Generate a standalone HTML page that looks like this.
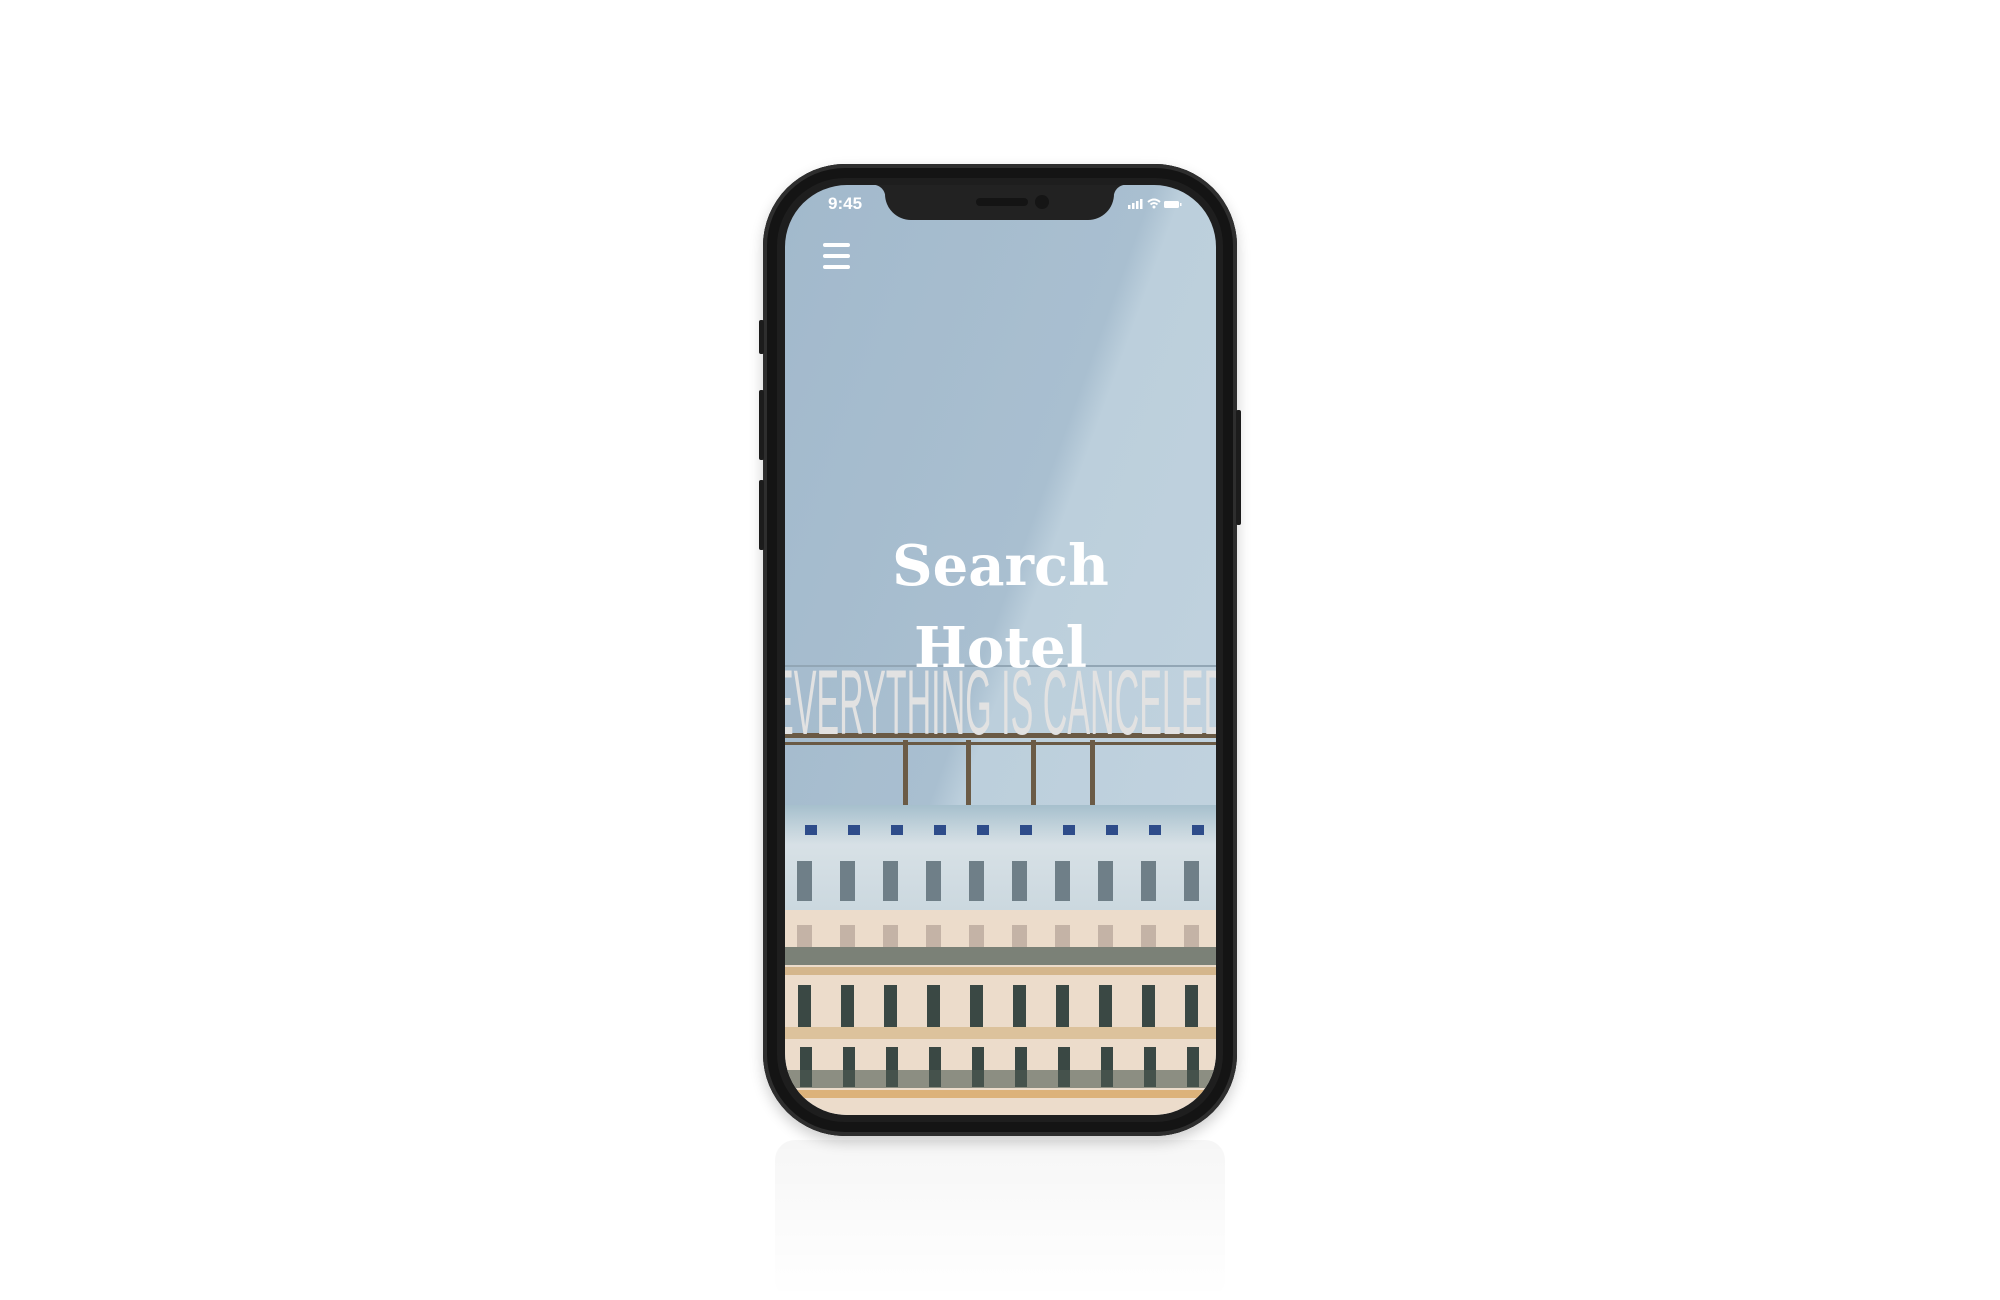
<!DOCTYPE html>
<html><head><style>
html,body{margin:0;padding:0;width:2000px;height:1300px;background:#fff;overflow:hidden}
.refl{position:absolute;left:775px;top:1140px;width:450px;height:160px;background:linear-gradient(rgba(0,0,0,0.035),rgba(0,0,0,0));border-radius:20px}
.phone{position:absolute;left:763px;top:164px;width:474px;height:972px;border-radius:82px;background:#1e1e1e;box-shadow:inset 0 0 0 4px #2e2e2e,inset 0 0 0 14px #141414,0 6px 14px rgba(0,0,0,0.2)}
.btn{position:absolute;background:#1c1c1c;border-radius:2px}
.screen{position:absolute;left:785px;top:185px;width:431px;height:930px;border-radius:62px;overflow:hidden;background:linear-gradient(110deg,#a2b9cc 0%,#a9bfd0 48%,#bccfdc 52%,#c2d3df 100%)}
.notch{position:absolute;left:100px;top:0;width:229px;height:35px;background:#222;border-radius:0 0 26px 26px}
.notch:before{content:"";position:absolute;left:-12px;top:0;width:12px;height:12px;background:radial-gradient(circle at 0 100%,transparent 12px,#222 12.5px)}
.notch:after{content:"";position:absolute;right:-12px;top:0;width:12px;height:12px;background:radial-gradient(circle at 100% 100%,transparent 12px,#222 12.5px)}
.spk{position:absolute;left:91px;top:13px;width:52px;height:8px;border-radius:4px;background:#141414}
.cam{position:absolute;left:150px;top:10px;width:14px;height:14px;border-radius:50%;background:#151515}
.time{position:absolute;left:43px;top:9px;color:#fff;font:bold 17px "Liberation Sans",sans-serif}
.ham{position:absolute;left:38px;top:58px;width:27px}
.ham div{height:4px;background:#fff;border-radius:2px;margin-bottom:7px}
.title{position:absolute;left:0;width:431px;top:340px;text-align:center;color:#fff;font:bold 56px/82px "DejaVu Serif","Liberation Serif",serif;z-index:3}
.sign{position:absolute;left:-14px;top:468px;white-space:nowrap;color:#e2e2e2;font:92px "Liberation Sans",sans-serif;transform:scaleX(0.37);transform-origin:0 0;line-height:100px;z-index:2}
.bar{position:absolute;left:0;width:431px;background:#6a5a45}
.post{position:absolute;width:5px;top:555px;height:65px;background:#6b5b46}
.roof{position:absolute;left:0;top:620px;width:431px;height:105px;background:linear-gradient(#dfe6ea,#cbd8df)}
.facade{position:absolute;left:0;top:725px;width:431px;height:210px;background:#ecdccb}
.row{position:absolute;left:0;width:431px}
</style></head><body>
<div class="refl"></div>
<div class="phone"></div>
<div class="btn" style="left:759px;top:320px;width:5px;height:34px"></div>
<div class="btn" style="left:759px;top:390px;width:5px;height:70px"></div>
<div class="btn" style="left:759px;top:480px;width:5px;height:70px"></div>
<div class="btn" style="left:1236px;top:410px;width:5px;height:115px"></div>
<div class="screen">
 <div class="notch"><div class="spk"></div><div class="cam"></div></div>
 <div class="time">9:45</div>
 <svg style="position:absolute;left:341px;top:12px" width="70" height="14" viewBox="0 0 70 14">
  <rect x="2" y="8" width="2.5" height="4" fill="#fff"/><rect x="6" y="6" width="2.5" height="6" fill="#fff"/><rect x="10" y="4" width="2.5" height="8" fill="#fff"/><rect x="14" y="2" width="2.5" height="10" fill="#fff"/>
  <path d="M22 5 Q28 0 34 5" stroke="#fff" stroke-width="2" fill="none"/><path d="M24.5 7.5 Q28 4.5 31.5 7.5" stroke="#fff" stroke-width="2" fill="none"/><circle cx="28" cy="10" r="1.5" fill="#fff"/>
  <rect x="38" y="4" width="15" height="7" rx="1.5" fill="#fff"/><rect x="54" y="6" width="1.5" height="3" fill="#fff"/>
 </svg>
 <div class="ham"><div></div><div></div><div></div></div>
 <div class="title">Search<br>Hotel</div>
 <div class="bar" style="top:480px;height:2px;background:#92a6b5"></div>
 <div class="sign">EVERYTHING IS CANCELED</div>
 <div class="bar" style="top:548px;height:5px"></div>
 <div class="bar" style="top:557px;height:3px"></div>
 <div class="post" style="left:118px"></div><div class="post" style="left:181px"></div><div class="post" style="left:246px"></div><div class="post" style="left:305px"></div>
 <div class="roof"></div>
 <div style="position:absolute;left:0;top:620px;width:431px;height:40px;background:linear-gradient(rgba(60,120,150,0.35),rgba(60,120,150,0))"></div>
 <div class="row" style="top:640px;height:10px;background:repeating-linear-gradient(90deg,transparent 0 20px,#2e4c8a 20px 32px,transparent 32px 43px)"></div>
 <div class="row" style="top:676px;height:40px;background:repeating-linear-gradient(90deg,transparent 0 12px,#6f7f88 12px 27px,transparent 27px 43px)"></div>
 <div class="facade"></div>
 <div class="row" style="top:740px;height:22px;background:repeating-linear-gradient(90deg,transparent 0 12px,#c4b3a6 12px 27px,transparent 27px 43px)"></div>
 <div class="row" style="top:762px;height:18px;background:#4c5a52;opacity:0.7"></div>
 <div class="row" style="top:782px;height:8px;background:#d4b68c"></div>
 <div class="row" style="top:800px;height:42px;background:repeating-linear-gradient(90deg,transparent 0 13px,#3a4844 13px 26px,transparent 26px 43px)"></div>
 <div class="row" style="top:842px;height:12px;background:#dcc29c"></div>
 <div class="row" style="top:862px;height:40px;background:repeating-linear-gradient(90deg,transparent 0 15px,#3a4844 15px 27px,transparent 27px 43px)"></div>
 <div class="row" style="top:885px;height:18px;background:#4c5a52;opacity:0.6"></div>
 <div class="row" style="top:905px;height:8px;background:#dcb27a"></div>
</div>
</body></html>
